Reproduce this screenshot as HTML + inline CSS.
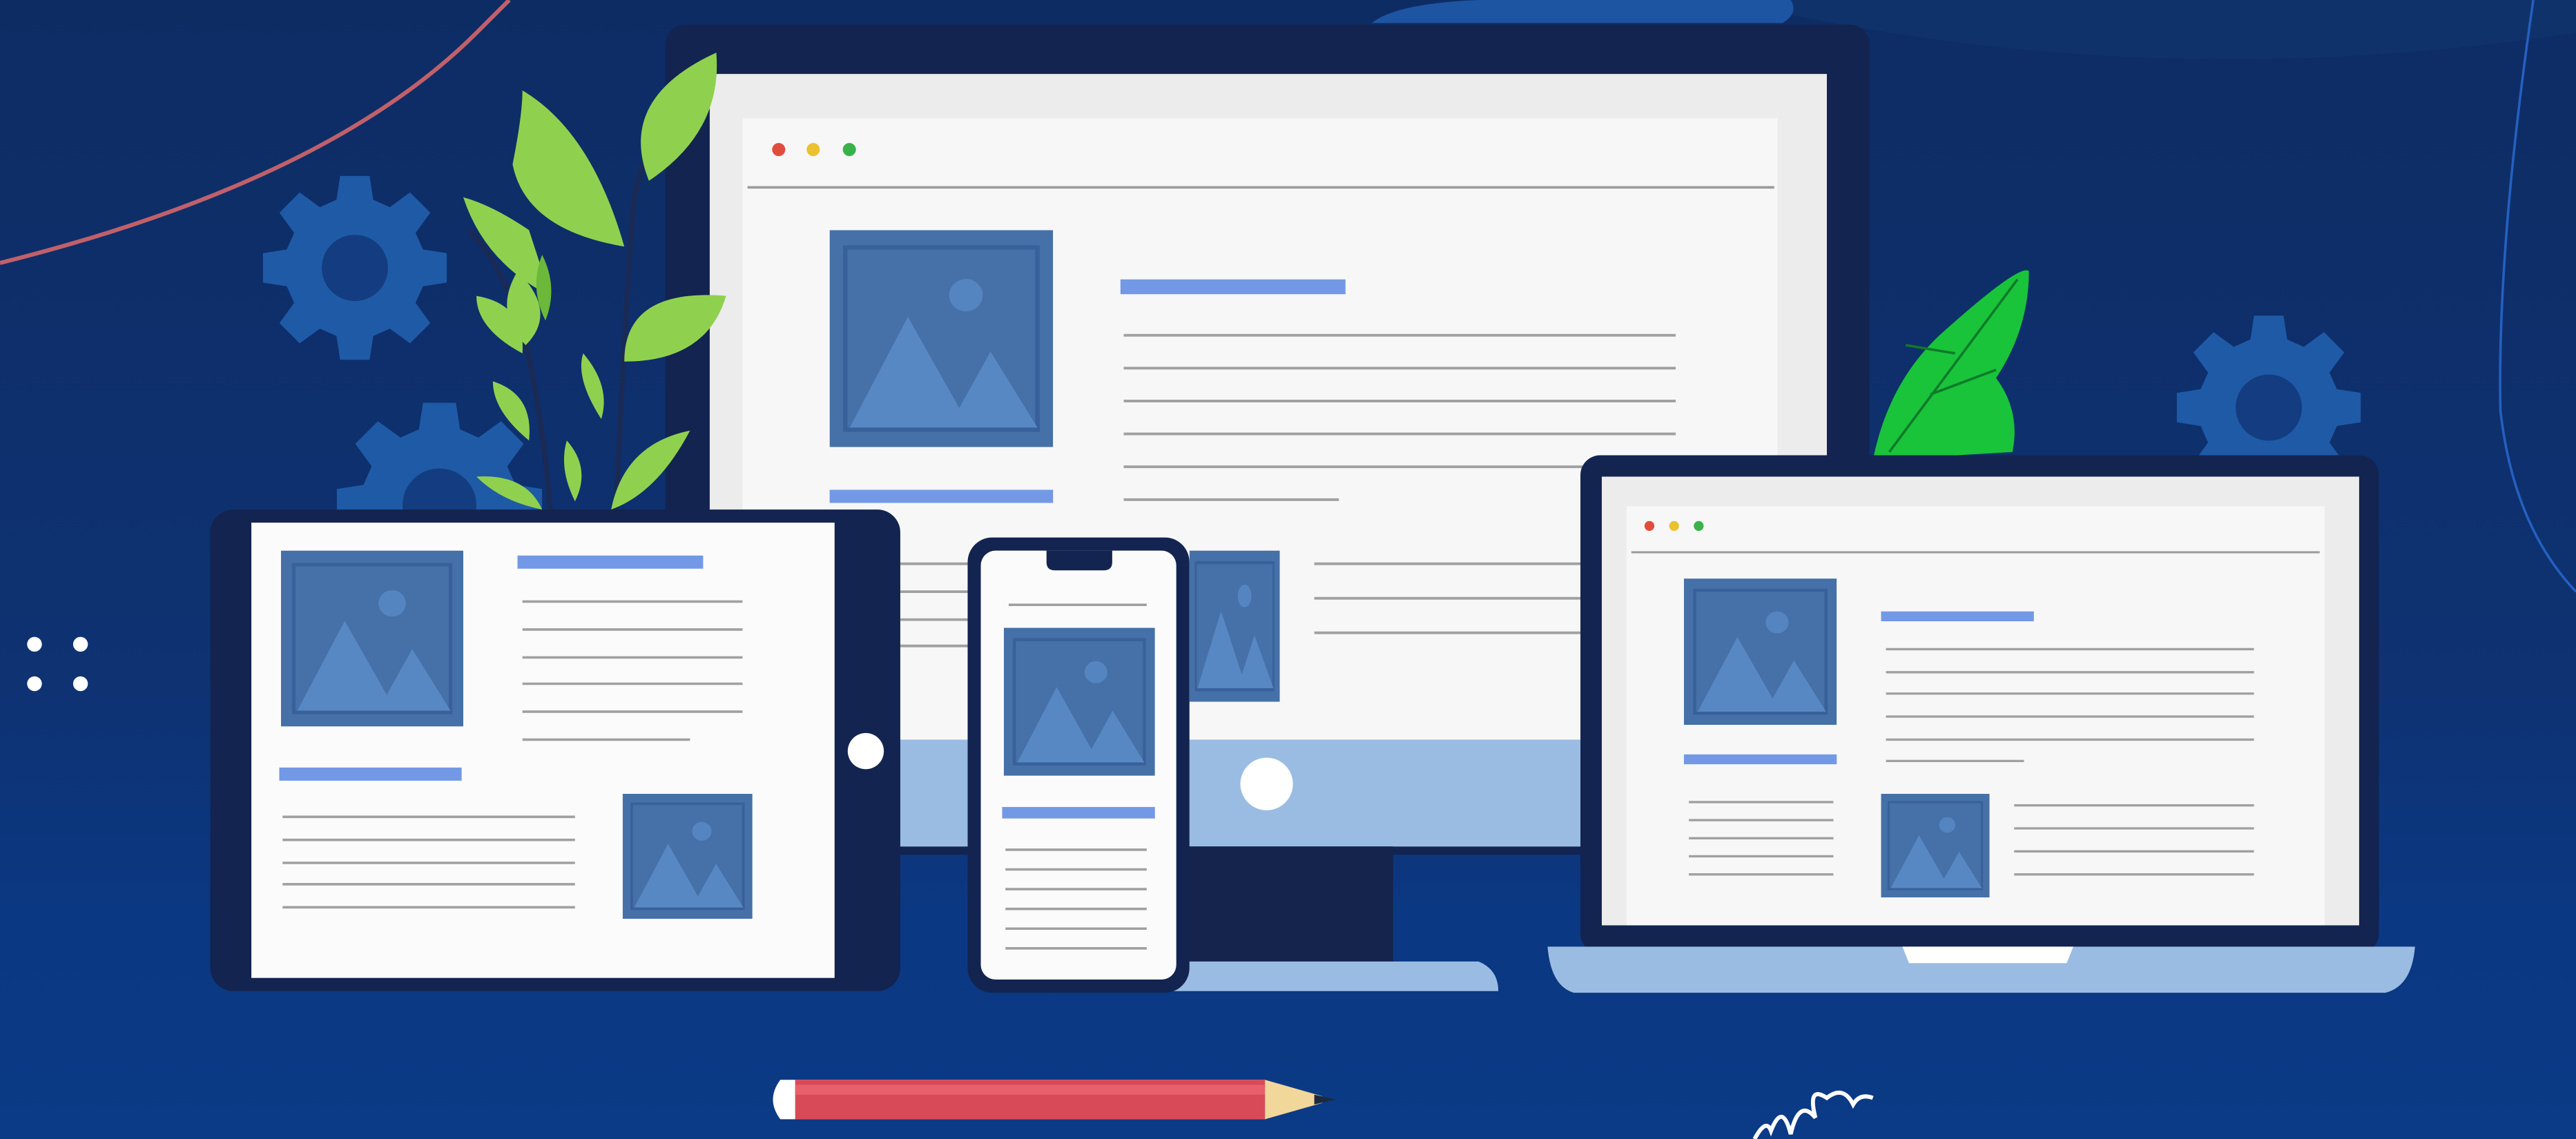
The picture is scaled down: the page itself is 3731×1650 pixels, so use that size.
<!DOCTYPE html>
<html><head><meta charset="utf-8"><style>
html,body{margin:0;padding:0;background:#0d2f6a;overflow:hidden}
svg{display:block;width:3731px;height:1650px}
</style></head><body>
<svg viewBox="0 0 1568 693" preserveAspectRatio="none" xmlns="http://www.w3.org/2000/svg">
<defs>
<linearGradient id="bg" x1="0" y1="0" x2="0" y2="1">
<stop offset="0" stop-color="#0e2c64"/><stop offset="0.6" stop-color="#0e3272"/><stop offset="0.8" stop-color="#0b3882"/><stop offset="1" stop-color="#0b3a86"/>
</linearGradient>
<symbol id="img" viewBox="0 0 100 100" preserveAspectRatio="none">
<rect width="100" height="100" fill="#4670a8"/>
<rect x="7" y="8" width="86" height="84" fill="#4670a8" stroke="#38609a" stroke-width="2"/>
<circle cx="61" cy="30" r="7.5" fill="#5585c0"/>
<path d="M9 91 L35 40 L58 82 L72 56 L93 91Z" fill="#5788c3"/>
</symbol>
<symbol id="gear" viewBox="-50 -50 100 100">
<path fill="#1f5aa6" d="M-8-50h16l2 13 9 4 11-8 11 11-8 11 4 9 13 2v16l-13 2-4 9 8 11-11 11-11-8-9 4-2 13h-16l-2-13-9-4-11 8-11-11 8-11-4-9-13-2v-16l13-2 4-9-8-11 11-11 11 8 9-4z"/>
<circle r="18" fill="#133d80"/>
</symbol>
</defs>
<rect width="1568" height="693" fill="url(#bg)"/>
<path d="M1050 0 Q1300 60 1568 20 V0Z" fill="#12386f" opacity=".5"/>
<path d="M0 160 Q200 110 290 20 L310 0" stroke="#c0606a" stroke-width="2.5" fill="none"/>
<path d="M1542 0 Q1520 150 1522 250 Q1530 320 1568 360" stroke="#2460c0" stroke-width="1.5" fill="none"/>
<path d="M835 14 Q850 2 900 0 H1090 Q1095 8 1085 14Z" fill="#1d55a3"/>
<use href="#gear" x="160" y="107" width="112" height="112"/>
<use href="#gear" x="1325" y="192" width="112" height="112"/>
<use href="#gear" x="205" y="245" width="125" height="125"/>
<circle cx="21" cy="392" r="4.5" fill="#fff"/><circle cx="49" cy="392" r="4.5" fill="#fff"/>
<circle cx="21" cy="416" r="4.5" fill="#fff"/><circle cx="49" cy="416" r="4.5" fill="#fff"/>
<!-- right leaf -->
<path d="M1140 280 Q1150 230 1185 200 Q1230 160 1235 165 Q1235 200 1215 230 Q1230 250 1225 275Z" fill="#19c43a"/>
<path d="M1150 275 L1228 170 M1175 240 L1215 225 M1190 215 L1160 210" stroke="#0f7a2a" stroke-width="1.5" fill="none"/>
<!-- monitor -->
<rect x="405" y="15" width="733" height="505" rx="12" fill="#132450"/>
<rect x="432" y="45" width="680" height="470" fill="#ececec"/>
<rect x="452" y="72" width="630" height="440" fill="#f7f7f7"/>
<circle cx="474" cy="91" r="4" fill="#e24c3c"/><circle cx="495" cy="91" r="4" fill="#eac230"/><circle cx="517" cy="91" r="4" fill="#3ab24a"/>
<line x1="455" y1="114" x2="1080" y2="114" stroke="#9a9a9a" stroke-width="1.5"/>
<use href="#img" x="505" y="140" width="136" height="132"/>
<rect x="682" y="170" width="137" height="9" fill="#7399e6"/>
<rect x="505" y="298" width="136" height="8" fill="#7399e6"/>
<g stroke="#a0a0a0" stroke-width="1.6">
<line x1="684" y1="204" x2="1020" y2="204"/><line x1="684" y1="224" x2="1020" y2="224"/><line x1="684" y1="244" x2="1020" y2="244"/><line x1="684" y1="264" x2="1020" y2="264"/><line x1="684" y1="284" x2="1020" y2="284"/><line x1="684" y1="304" x2="815" y2="304"/>
<line x1="800" y1="343" x2="965" y2="343"/><line x1="800" y1="364" x2="965" y2="364"/><line x1="800" y1="385" x2="965" y2="385"/>
<line x1="548" y1="343" x2="590" y2="343"/><line x1="548" y1="360" x2="590" y2="360"/><line x1="548" y1="377" x2="590" y2="377"/><line x1="548" y1="393" x2="590" y2="393"/>
</g>
<use href="#img" x="724" y="335" width="55" height="92"/>
<rect x="432" y="450" width="680" height="65" fill="#9bbce2"/>
<circle cx="771" cy="477" r="16" fill="#fff"/>
<rect x="720" y="515" width="128" height="70" fill="#15244c"/>
<path d="M700 585 H900 Q912 590 912 603 H700Z" fill="#9bbce2"/>
<!-- plant -->
<g stroke="#1a2a55" stroke-width="3" fill="none">
<path d="M375 310 Q380 200 385 130 Q390 80 430 40"/><path d="M335 310 Q330 250 318 200 Q305 160 285 140"/>
</g>
<g fill="#8fd14f">
<path d="M436 32 Q440 80 395 110 Q375 60 436 32Z"/>
<path d="M380 150 Q320 140 312 100 Q318 70 318 55 Q360 80 380 150Z"/>
<path d="M442 180 Q430 220 380 220 Q380 175 442 180Z"/>
<path d="M315 165 Q300 150 280 135 Q300 150 315 165 Q340 190 320 210 Q300 190 315 165Z"/>
<path d="M335 180 L322 140 Q300 125 282 120 Q295 160 335 180Z"/>
<path d="M318 215 Q290 200 290 180 Q320 185 318 215Z"/>
<path d="M322 268 Q300 250 300 232 Q325 240 322 268Z"/>
<path d="M420 262 Q400 300 372 310 Q380 270 420 262Z"/>
<path d="M350 305 Q340 285 345 268 Q360 285 350 305Z"/>
<path d="M366 255 Q350 230 355 215 Q372 235 366 255Z"/>
<path d="M330 310 Q305 305 290 290 Q320 288 330 310Z"/>
</g>
<path d="M332 195 Q322 175 330 155 Q340 175 332 195Z" fill="#6bb83a"/>
<!-- tablet -->
<rect x="128" y="310" width="420" height="293" rx="14" fill="#132450"/>
<rect x="153" y="318" width="355" height="277" fill="#fbfbfb"/>
<circle cx="527" cy="457" r="11" fill="#fff"/>
<use href="#img" x="171" y="335" width="111" height="107"/>
<rect x="315" y="338" width="113" height="8" fill="#7399e6"/>
<rect x="170" y="467" width="111" height="8" fill="#7399e6"/>
<use href="#img" x="379" y="483" width="79" height="76"/>
<g stroke="#a0a0a0" stroke-width="1.5">
<line x1="318" y1="366" x2="452" y2="366"/><line x1="318" y1="383" x2="452" y2="383"/><line x1="318" y1="400" x2="452" y2="400"/><line x1="318" y1="416" x2="452" y2="416"/><line x1="318" y1="433" x2="452" y2="433"/><line x1="318" y1="450" x2="420" y2="450"/>
<line x1="172" y1="497" x2="350" y2="497"/><line x1="172" y1="511" x2="350" y2="511"/><line x1="172" y1="525" x2="350" y2="525"/><line x1="172" y1="538" x2="350" y2="538"/><line x1="172" y1="552" x2="350" y2="552"/>
</g>
<!-- phone -->
<rect x="589" y="327" width="135" height="277" rx="15" fill="#132450"/>
<rect x="597" y="335" width="119" height="261" rx="9" fill="#fbfbfb"/>
<path d="M637 335 h40 v7 q0 5 -5 5 h-30 q-5 0 -5 -5z" fill="#132450"/>
<use href="#img" x="611" y="382" width="92" height="90"/>
<rect x="610" y="491" width="93" height="7" fill="#7399e6"/>
<g stroke="#a0a0a0" stroke-width="1.5">
<line x1="614" y1="368" x2="698" y2="368"/>
<line x1="612" y1="517" x2="698" y2="517"/><line x1="612" y1="529" x2="698" y2="529"/><line x1="612" y1="541" x2="698" y2="541"/><line x1="612" y1="553" x2="698" y2="553"/><line x1="612" y1="565" x2="698" y2="565"/><line x1="612" y1="577" x2="698" y2="577"/>
</g>
<!-- laptop -->
<rect x="962" y="277" width="486" height="303" rx="12" fill="#132450"/>
<rect x="975" y="290" width="461" height="273" fill="#ececec"/>
<rect x="990" y="308" width="425" height="255" fill="#f7f7f7"/>
<circle cx="1004" cy="320" r="3" fill="#e24c3c"/><circle cx="1019" cy="320" r="3" fill="#eac230"/><circle cx="1034" cy="320" r="3" fill="#3ab24a"/>
<line x1="993" y1="336" x2="1412" y2="336" stroke="#9a9a9a" stroke-width="1.3"/>
<use href="#img" x="1025" y="352" width="93" height="89"/>
<rect x="1145" y="372" width="93" height="6" fill="#7399e6"/>
<rect x="1025" y="459" width="93" height="6" fill="#7399e6"/>
<use href="#img" x="1145" y="483" width="66" height="63"/>
<g stroke="#a0a0a0" stroke-width="1.4">
<line x1="1148" y1="395" x2="1372" y2="395"/><line x1="1148" y1="409" x2="1372" y2="409"/><line x1="1148" y1="422" x2="1372" y2="422"/><line x1="1148" y1="436" x2="1372" y2="436"/><line x1="1148" y1="450" x2="1372" y2="450"/><line x1="1148" y1="463" x2="1232" y2="463"/>
<line x1="1028" y1="488" x2="1116" y2="488"/><line x1="1028" y1="499" x2="1116" y2="499"/><line x1="1028" y1="510" x2="1116" y2="510"/><line x1="1028" y1="521" x2="1116" y2="521"/><line x1="1028" y1="532" x2="1116" y2="532"/>
<line x1="1226" y1="490" x2="1372" y2="490"/><line x1="1226" y1="504" x2="1372" y2="504"/><line x1="1226" y1="518" x2="1372" y2="518"/><line x1="1226" y1="532" x2="1372" y2="532"/>
</g>
<path d="M942 576 H1470 Q1468 600 1452 604 H958 Q944 600 942 576Z" fill="#9bbce2"/>
<path d="M1158 576 H1262 L1258 586 H1162Z" fill="#fff"/>
<!-- pencil -->
<path d="M475 657 H770 V681 H475 Q466 669 475 657Z" fill="#fff"/>
<rect x="484" y="657" width="286" height="24" fill="#d84a58"/>
<rect x="484" y="660" width="286" height="6" fill="#e8606c"/>
<path d="M770 657 L805 667 L805 671 L770 681Z" fill="#f1d79a"/>
<path d="M800 666 L813 669 L800 672Z" fill="#1a2a40"/>
<!-- scribble -->
<path d="M1068 693 Q1075 680 1078 688 Q1085 670 1090 690 Q1095 668 1105 680 Q1100 660 1112 668 Q1122 660 1128 672 Q1132 665 1140 668" stroke="#fff" stroke-width="2.5" fill="none"/>
</svg>
</body></html>
